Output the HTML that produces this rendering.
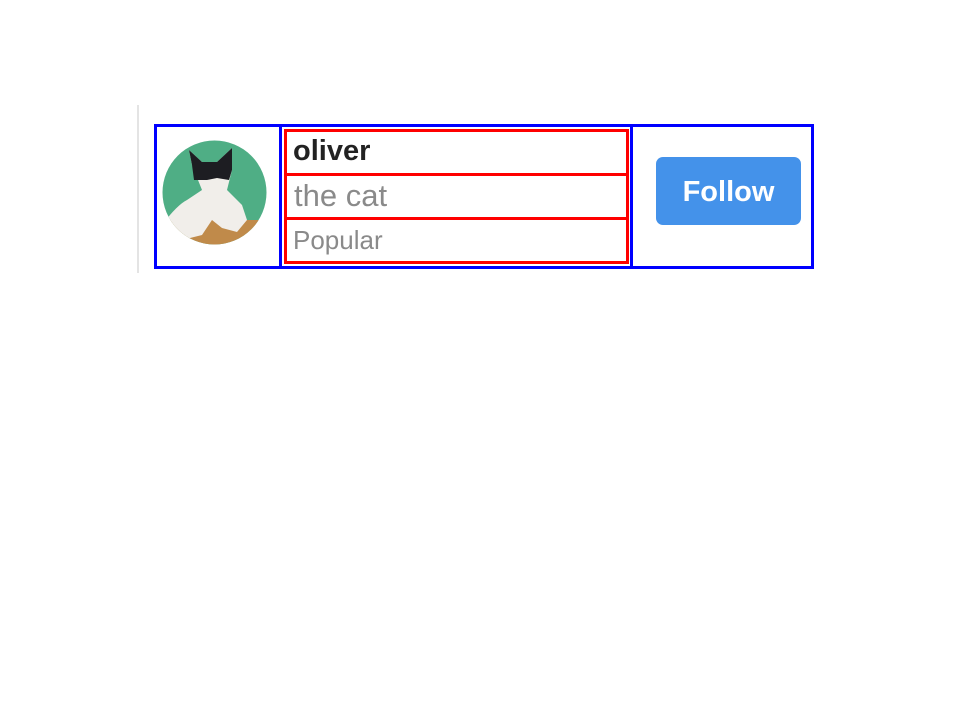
<!DOCTYPE html>
<html><head><style>
body{margin:0;width:960px;height:720px;background:#fff;position:relative;font-family:"Liberation Sans",sans-serif;overflow:hidden}
.a{position:absolute;box-sizing:border-box}
.b{border:3px solid #0000ff}
.r{border:3px solid #ff0000}
</style></head><body>
<div class="a" style="left:137px;top:105px;width:2px;height:168px;background:#e4e4e4"></div>
<div class="a b" style="left:154px;top:124px;width:660px;height:145px"></div>
<div class="a b" style="left:154px;top:124px;width:128px;height:145px"></div>
<div class="a b" style="left:630px;top:124px;width:184px;height:145px"></div>
<div class="a r" style="left:284px;top:129px;width:345px;height:47px"></div>
<div class="a r" style="left:284px;top:173px;width:345px;height:47px"></div>
<div class="a r" style="left:284px;top:217px;width:345px;height:47px"></div>
<svg class="a" style="left:162px;top:140px" width="105" height="105" viewBox="0 0 105 105">
<defs><clipPath id="c"><circle cx="52.5" cy="52.5" r="52"/></clipPath></defs>
<g clip-path="url(#c)">
<rect width="105" height="105" fill="#4fae85"/>
<rect x="0" y="80" width="105" height="30" fill="#c08a4a"/>
<path d="M0 85 Q15 65 25 60 L40 50 L30 25 L27 10 L40 22 L55 22 L70 8 L70 30 L65 50 L80 65 L85 80 L75 92 L60 88 L50 80 L40 95 L20 100 L0 100Z" fill="#f1eeea"/>
<path d="M30 25 L27 10 L40 22 L55 22 L70 8 L70 30 L67 40 L55 38 L45 40 L32 40Z" fill="#1d1d22"/>
</g></svg>
<div class="a" style="left:293px;top:135px;font-size:29px;font-weight:bold;color:#222">oliver</div>
<div class="a" style="left:294px;top:178px;font-size:31px;color:#8a8a8a">the cat</div>
<div class="a" style="left:293px;top:225px;font-size:26px;color:#8a8a8a">Popular</div>
<div class="a" style="left:656px;top:157px;width:145px;height:68px;background:#4492ea;border-radius:7px;color:#fff;font-weight:bold;font-size:29px;line-height:70px;text-align:center">Follow</div>
</body></html>
